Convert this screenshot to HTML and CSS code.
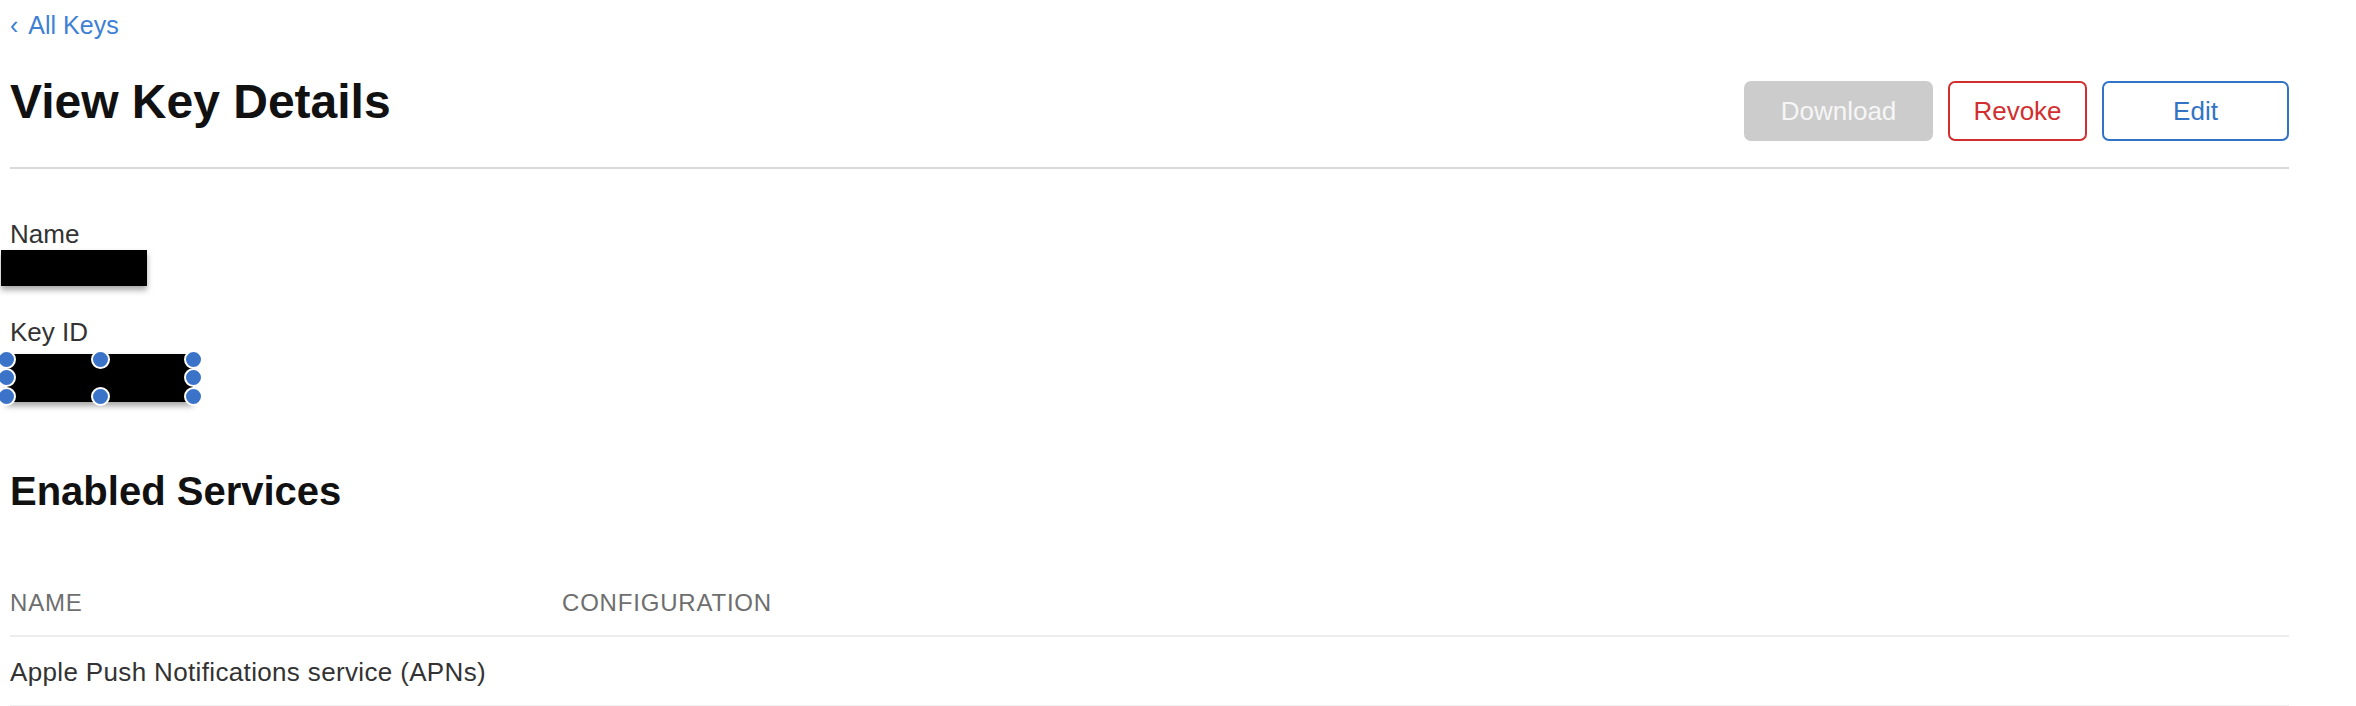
FILE: index.html
```html
<!DOCTYPE html>
<html lang="en">
<head>
<meta charset="utf-8">
<title>View Key Details</title>
<link rel="stylesheet" href="styles.css">
</head>
<body>
<main class="page">
  <a class="back-link" href="#"><span class="chev">‹</span>All Keys</a>

  <header class="page-header">
    <h1 class="title">View Key Details</h1>
    <div class="actions">
      <button class="btn btn-disabled" type="button">Download</button>
      <button class="btn btn-danger" type="button">Revoke</button>
      <button class="btn btn-primary" type="button">Edit</button>
    </div>
  </header>

  <section class="details">
    <div class="field">
      <div class="label">Name</div>
      <div class="redact redact-name"></div>
    </div>
    <div class="field field-key">
      <div class="label">Key ID</div>
      <div class="redact redact-key">
        <span class="handle h-tl"></span>
        <span class="handle h-tm"></span>
        <span class="handle h-tr"></span>
        <span class="handle h-ml"></span>
        <span class="handle h-mr"></span>
        <span class="handle h-bl"></span>
        <span class="handle h-bm"></span>
        <span class="handle h-br"></span>
      </div>
    </div>
  </section>

  <section class="services">
    <h2 class="section-title">Enabled Services</h2>
    <div class="table">
      <div class="row head">
        <div class="cell">NAME</div>
        <div class="cell">CONFIGURATION</div>
      </div>
      <div class="row body-row">
        <div class="cell">Apple Push Notifications service (APNs)</div>
        <div class="cell"></div>
      </div>
    </div>
  </section>
</main>
</body>
</html>
```

FILE: styles.css
```css
* { box-sizing: border-box; }

html, body {
  margin: 0;
  padding: 0;
  background: #ffffff;
}

body {
  font-family: "Liberation Sans", Arial, sans-serif;
  color: #333333;
}

.page {
  width: 2279px;
  margin-left: 10px;
  padding-top: 10px;
}

.back-link {
  display: block;
  font-size: 25px;
  line-height: 30px;
  color: #3d80d4;
  text-decoration: none;
}

.chev {
  display: inline-block;
  margin-right: 10px;
}

.page-header {
  display: flex;
  justify-content: space-between;
  align-items: flex-start;
  margin-top: 34px;
  padding-bottom: 26px;
  border-bottom: 2px solid #d9d9d9;
}

.title {
  margin: 0;
  font-size: 48px;
  line-height: 56px;
  font-weight: 700;
  color: #111111;
}

.actions {
  display: flex;
  gap: 15px;
  margin-top: 7px;
}

.btn {
  height: 60px;
  font-family: "Liberation Sans", Arial, sans-serif;
  font-size: 26px;
  border-radius: 7px;
  background: #ffffff;
  padding: 0;
  cursor: pointer;
}

.btn-disabled {
  width: 189px;
  background: #cccccc;
  border: 2px solid #cccccc;
  color: #f6f6f6;
}

.btn-danger {
  width: 139px;
  border: 2px solid #d12f2f;
  color: #d12f2f;
}

.btn-primary {
  width: 187px;
  border: 2px solid #3273c6;
  color: #3273c6;
}

.details {
  margin-top: 50px;
}

.label {
  font-size: 26px;
  line-height: 30px;
  color: #333333;
}

.field-key {
  margin-top: 31px;
}

.redact {
  background: #000000;
  box-shadow: 0 4px 6px rgba(0, 0, 0, 0.35);
}

.redact-name {
  width: 146px;
  height: 36px;
  margin-top: 1px;
  margin-left: -9px;
}

.redact-key {
  position: relative;
  width: 187px;
  height: 48px;
  margin-top: 7px;
  margin-left: -4px;
}

.handle {
  position: absolute;
  width: 19px;
  height: 19px;
  margin: -9.5px 0 0 -9.5px;
  border-radius: 50%;
  background: #3a73c8;
  border: 2px solid #ffffff;
}

.h-tl { left: 0; top: 5px; }
.h-tm { left: 94px; top: 5px; }
.h-tr { left: 187px; top: 5px; }
.h-ml { left: 0; top: 23px; }
.h-mr { left: 187px; top: 23px; }
.h-bl { left: 0; top: 42px; }
.h-bm { left: 94px; top: 42px; }
.h-br { left: 187px; top: 42px; }

.services {
  margin-top: 66px;
}

.section-title {
  margin: 0;
  font-size: 40px;
  line-height: 46px;
  font-weight: 700;
  color: #111111;
}

.table {
  margin-top: 75px;
}

.row {
  display: grid;
  grid-template-columns: 552px 1fr;
  border-bottom: 2px solid #eeeeee;
}

.row.head {
  padding-bottom: 18px;
}

.row.head .cell {
  font-size: 24px;
  line-height: 28px;
  letter-spacing: 0.8px;
  color: #6e6e6e;
}

.row.body-row {
  padding-top: 20px;
  padding-bottom: 18px;
}

.row.body-row .cell {
  font-size: 26px;
  line-height: 30px;
  letter-spacing: 0.35px;
  color: #333333;
}
```
